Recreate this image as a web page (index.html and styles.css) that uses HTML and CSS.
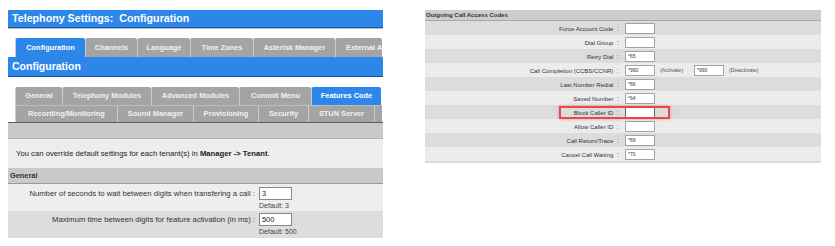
FILE: index.html
```html
<!DOCTYPE html>
<html lang="en">
<head>
    <meta charset="UTF-8">
    <title>Telephony Settings: Configuration</title>
    <link rel="stylesheet" href="styles.css">
</head>
<body>
    <div class="shot left">
        <div class="page-title">Telephony Settings:&nbsp; Configuration</div>

        <div class="tabs tabs-main">
            <span class="tab active">Configuration</span>
            <span class="tab">Channels</span>
            <span class="tab">Language</span>
            <span class="tab">Time Zones</span>
            <span class="tab">Asterisk Manager</span>
            <span class="tab clipped">External Access</span>
        </div>

        <div class="section-title">Configuration</div>

        <div class="subtabs">
            <div class="tabs tabs-row2">
                <span class="tab">General</span>
                <span class="tab">Telephony Modules</span>
                <span class="tab">Advanced Modules</span>
                <span class="tab">Commit Menu</span>
                <span class="tab active">Features Code</span>
            </div>
            <div class="tabs tabs-row3">
                <span class="tab">Recording/Monitoring</span>
                <span class="tab">Sound Manager</span>
                <span class="tab">Provisioning</span>
                <span class="tab">Security</span>
                <span class="tab">STUN Server</span>
                <span class="tab"></span>
            </div>
        </div>

        <div class="toolbar"></div>

        <div class="panel">
            <p class="note">You can override default settings for each tenant(s) in <b>Manager -&gt; Tenant</b>.</p>

            <div class="group-head">General</div>

            <div class="field-row">
                <label>Number of seconds to wait between digits when transfering a call :</label>
                <div class="field">
                    <input type="text" value="3">
                    <small>Default: 3</small>
                </div>
            </div>

            <div class="field-row alt">
                <label>Maximum time between digits for feature activation (in ms) :</label>
                <div class="field">
                    <input type="text" value="500">
                    <small>Default: 500</small>
                </div>
            </div>
        </div>
    </div>

    <div class="shot right">
        <div class="codes-head">Outgoing Call Access Codes</div>

        <div class="code-row">
            <span class="code-label">Force Account Code <i>:</i></span>
            <input class="code-input" type="text" value="">
        </div>
        <div class="code-row alt">
            <span class="code-label">Dial Group <i>:</i></span>
            <input class="code-input" type="text" value="">
        </div>
        <div class="code-row">
            <span class="code-label">Retry Dial <i>:</i></span>
            <input class="code-input" type="text" value="*65">
        </div>
        <div class="code-row alt">
            <span class="code-label">Call Completion (CCBS/CCNR) <i>:</i></span>
            <input class="code-input" type="text" value="*990">
            <span class="hint">(Activate)</span>
            <input class="code-input" type="text" value="*990">
            <span class="hint">(Deactivate)</span>
        </div>
        <div class="code-row">
            <span class="code-label">Last Number Redial <i>:</i></span>
            <input class="code-input" type="text" value="*66">
        </div>
        <div class="code-row alt">
            <span class="code-label">Saved Number <i>:</i></span>
            <input class="code-input" type="text" value="*64">
        </div>
        <div class="code-row">
            <span class="code-label">Block Caller ID <i>:</i></span>
            <input class="code-input focused" type="text" value="">
        </div>
        <div class="code-row alt">
            <span class="code-label">Allow Caller ID <i>:</i></span>
            <input class="code-input" type="text" value="">
        </div>
        <div class="code-row">
            <span class="code-label">Call Return/Trace <i>:</i></span>
            <input class="code-input" type="text" value="*69">
        </div>
        <div class="code-row alt">
            <span class="code-label">Cancel Call Waiting <i>:</i></span>
            <input class="code-input" type="text" value="*70">
        </div>
        <div class="code-row">
            <span class="code-label"></span>
            <input class="code-input" type="text" value="">
        </div>

        <div class="highlight"></div>
    </div>
</body>
</html>
```

FILE: styles.css
```css
* {
    margin: 0;
    padding: 0;
    box-sizing: border-box;
}
body {
    display: flex;
    align-items: flex-start;
    background: #fff;
    font-family: "Liberation Sans", Arial, sans-serif;
    color: #333;
}
.shot {
    margin-top: 10px;
}

/* Left screenshot */
.left {
    margin-left: 8px;
    width: 375px;
}
.page-title {
    height: 18px;
    padding-left: 4px;
    background: #2d87e9;
    border-bottom: 1px solid #1d5aa5;
    box-shadow: 0 1px 0 #b4bcc6;
    color: #fff;
    font-weight: bold;
    font-size: 10.7px;
    line-height: 17px;
}
.tabs {
    display: grid;
    margin-left: 7px;
    overflow: hidden;
}
.tabs-main {
    margin-top: 10px;
    height: 19px;
    grid-template-columns: 70px 52px 53px 63px 82px 47px;
}
.tab {
    background: #a4a4a4;
    border-left: 1px solid #cdcdcd;
    border-radius: 2px 2px 0 0;
    color: #f2f2f2;
    font-weight: bold;
    font-size: 7.4px;
    text-align: center;
    white-space: nowrap;
    overflow: hidden;
}
.tabs-main .tab {
    line-height: 19px;
}
.tab.active {
    background: #2d87e9;
    color: #fff;
}
.tab.clipped {
    text-align: left;
    padding-left: 10px;
}
.section-title {
    height: 20px;
    padding-left: 4px;
    background: #2d87e9;
    border-bottom: 1px solid #1b4f8c;
    color: #fff;
    font-weight: bold;
    font-size: 10.5px;
    line-height: 19px;
}
.subtabs {
    margin-top: 10px;
    border-bottom: 1px solid #4b6079;
}
.tabs-row2 {
    height: 18px;
    grid-template-columns: 47px 89px 88px 72px 70px;
}
.tabs-row2 .tab {
    line-height: 18px;
}
.tabs-row3 {
    height: 17px;
    grid-template-columns: 102px 76px 65px 50px 66px 8px;
}
.tabs-row3 .tab {
    line-height: 16px;
    border-top: 1px solid #bdbdbd;
    border-radius: 0;
}
.toolbar {
    height: 16px;
    background: #c9c9c9;
    border-bottom: 1px solid #b2b2b2;
}
.panel {
    background: #ededed;
}
.note {
    height: 29px;
    padding-left: 8px;
    font-size: 7.7px;
    line-height: 29px;
    color: #222;
}
.group-head {
    height: 16px;
    padding-left: 2px;
    background: #c9c9c9;
    border-bottom: 1px solid #999;
    font-weight: bold;
    font-size: 7.4px;
    line-height: 15px;
}
.field-row {
    display: grid;
    grid-template-columns: 247px 1fr;
    column-gap: 4px;
    height: 27px;
    padding-top: 3px;
    background: #eeeeee;
}
.field-row.alt {
    background: #dddddd;
    padding-top: 2px;
}
.field-row label {
    text-align: right;
    font-size: 7.7px;
    line-height: 13px;
}
.field input {
    display: block;
    width: 33px;
    height: 13px;
    padding: 0 2px;
    border: 1px solid #8a8a8a;
    background: #fff;
    font-family: inherit;
    font-size: 7.4px;
    color: #222;
}
.field small {
    display: block;
    font-size: 7px;
    line-height: 11px;
    color: #444;
}

/* Right screenshot */
.right {
    position: relative;
    margin-left: 42px;
    width: 396px;
    height: 153px;
    overflow: hidden;
}
.codes-head {
    height: 11px;
    padding-left: 1px;
    background: #cdcdcd;
    border-bottom: 1px solid #a9a9a9;
    font-weight: bold;
    font-size: 6px;
    line-height: 10px;
}
.code-row {
    display: flex;
    align-items: center;
    height: 14px;
    background: #dcdcdc;
}
.code-row.alt {
    background: #ececec;
}
.code-label {
    flex: none;
    width: 194px;
    text-align: right;
    font-size: 6px;
}
.code-label i {
    font-style: normal;
    font-size: 7px;
    color: #666;
    margin-left: 2px;
}
.code-input {
    width: 30px;
    height: 11px;
    margin-left: 6px;
    padding: 0 2px;
    border: 1px solid #a3a3a3;
    background: #fff;
    font-family: inherit;
    font-size: 5px;
    color: #333;
}
.code-input.focused {
    border-color: #666;
}
.hint {
    width: 28px;
    margin-left: 5px;
    font-size: 5.5px;
    color: #555;
}
.highlight {
    position: absolute;
    left: 134px;
    top: 96px;
    width: 111px;
    height: 13px;
    border: 2px solid #e8474b;
    box-shadow: 0 0 3px rgba(232, 71, 75, 0.5);
}
```
